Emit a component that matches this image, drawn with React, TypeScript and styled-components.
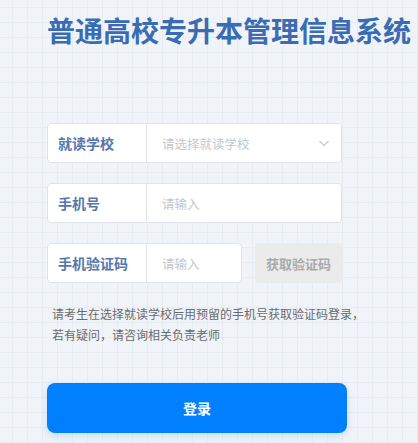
import styled, { createGlobalStyle } from 'styled-components'

const GlobalStyle = createGlobalStyle`
  html, body {
    margin: 0;
    padding: 0;
  }
  body {
    font-family: "Noto Sans CJK SC", "Noto Sans", sans-serif;
    background-color: #f0f4f8;
    background-image:
      linear-gradient(to right, #e7ecf1 1px, transparent 1px),
      linear-gradient(to bottom, #e7ecf1 1px, transparent 1px);
    background-size: 15px 15px;
    background-position: 12px 7px;
    min-height: 443px;
  }
`

const Page = styled.div`
  width: 418px;
  height: 443px;
  padding: 0 0 0 47px;
  box-sizing: border-box;
  overflow: hidden;
`

const Title = styled.h1`
  margin: 0;
  padding-top: 10px;
  height: 123px;
  box-sizing: border-box;
  font-size: 28px;
  line-height: 40px;
  font-weight: 700;
  color: #3a6cb3;
  white-space: nowrap;
`

const Form = styled.div`
  display: flex;
  flex-direction: column;
`

const Row = styled.div`
  display: flex;
  gap: 13px;
  margin-bottom: 20px;
`

const Field = styled.div<{ $width: number }>`
  width: ${({ $width }) => $width}px;
  height: 40px;
  box-sizing: border-box;
  display: flex;
  align-items: center;
  background: #fff;
  border: 1px solid #dfe3ea;
  border-radius: 4px;
`

const Label = styled.div`
  width: 99px;
  height: 100%;
  box-sizing: border-box;
  display: flex;
  align-items: center;
  padding-left: 10px;
  border-right: 1px solid #dfe3ea;
  font-size: 14px;
  font-weight: 700;
  color: #5577ad;
`

const Placeholder = styled.div`
  flex: 1;
  padding-left: 15px;
  font-size: 12.5px;
  color: #c4c7cc;
  display: flex;
  align-items: center;
  justify-content: space-between;
  padding-right: 11px;
`

const CodeButton = styled.div`
  width: 87px;
  height: 40px;
  display: flex;
  align-items: center;
  justify-content: center;
  background: #ebebeb;
  border-radius: 4px;
  font-size: 13px;
  font-weight: 700;
  color: #a9a9a9;
`

const Notice = styled.p`
  margin: 0 0 0 5px;
  font-size: 12px;
  line-height: 21px;
  color: #6b6b6b;
`

const LoginButton = styled.button`
  margin-top: 38px;
  width: 300px;
  height: 50px;
  border: none;
  border-radius: 8px;
  background: #0080ff;
  color: #fff;
  font-family: inherit;
  font-size: 14px;
  font-weight: 700;
  box-shadow: 0 3px 8px rgba(0, 128, 255, 0.18);
`

function Chevron() {
  return (
    <svg width="12" height="12" viewBox="0 0 12 12" fill="none">
      <path d="M1.5 4 L6 8.5 L10.5 4" stroke="#c0c4cc" strokeWidth="1.1" />
    </svg>
  )
}

export default function App() {
  return (
    <>
      <GlobalStyle />
      <Page>
        <Title>普通高校专升本管理信息系统</Title>
        <Form>
          <Row>
            <Field $width={295}>
              <Label>就读学校</Label>
              <Placeholder>
                <span>请选择就读学校</span>
                <Chevron />
              </Placeholder>
            </Field>
          </Row>
          <Row>
            <Field $width={295}>
              <Label>手机号</Label>
              <Placeholder>请输入</Placeholder>
            </Field>
          </Row>
          <Row>
            <Field $width={195}>
              <Label>手机验证码</Label>
              <Placeholder>请输入</Placeholder>
            </Field>
            <CodeButton>获取验证码</CodeButton>
          </Row>
          <Notice>
            请考生在选择就读学校后用预留的手机号获取验证码登录，
            <br />
            若有疑问，请咨询相关负责老师
          </Notice>
          <LoginButton>登录</LoginButton>
        </Form>
      </Page>
    </>
  )
}
